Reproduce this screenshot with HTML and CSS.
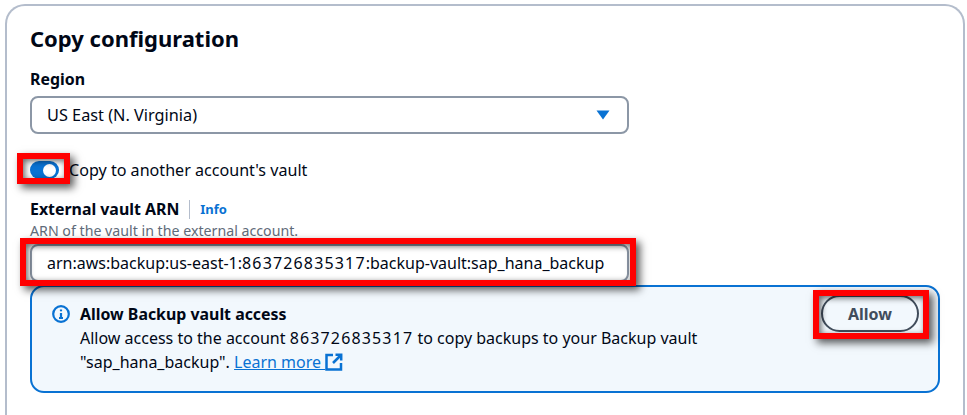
FILE: index.html
```html
<!DOCTYPE html>
<html lang="en">
<head>
<meta charset="UTF-8">
<meta name="viewport" content="width=device-width, initial-scale=1.0">
<title>Copy configuration</title>
<link rel="stylesheet" href="styles.css">
</head>
<body>
    <div class="card">
        <h2 class="card-title">Copy configuration</h2>

        <div class="field-label region-label">Region</div>
        <div class="select">
            <span>US East (N. Virginia)</span>
            <svg class="select-arrow" width="14" height="10" viewBox="0 0 14 10"><path d="M0.5 0.5H13.5L7 9.5Z" fill="#0972d3"/></svg>
        </div>

        <div class="toggle-row">
            <span class="toggle"><span class="toggle-knob"></span></span>
            <span>Copy to another account's vault</span>
        </div>

        <div class="label-row">
            <span class="field-label">External vault ARN</span>
            <span class="label-divider"></span>
            <a class="info-link" href="#">Info</a>
        </div>
        <div class="field-desc">ARN of the vault in the external account.</div>
        <div class="text-input">arn:aws:backup:us-east-1:<span class="digits">863726835317</span>:backup-vault:sap_hana_backup</div>

        <div class="alert">
            <svg class="alert-icon" width="18" height="18" viewBox="0 0 18 18" fill="none" stroke="#0972d3" stroke-width="2.2">
                <circle cx="9" cy="9" r="7.8"/>
                <path d="M9 8V13M7 13H11"/>
                <path d="M9 4.5V6.3"/>
            </svg>
            <div class="alert-body">
                <div class="alert-title">Allow Backup vault access</div>
                <div>Allow access to the account <span class="digits">863726835317</span> to copy backups to your Backup vault</div>
                <div>"sap_hana_backup". <a class="learn-link" href="#">Learn more <svg class="ext-icon" width="18" height="18" viewBox="0 0 18 18" fill="none" stroke="#0972d3" stroke-width="2.5"><path d="M8 2H1.5V16.5H16V10"/><path d="M10.5 1.8H16.2V7.5"/><path d="M16 2L8 10"/></svg></a></div>
            </div>
            <button class="allow-btn">Allow</button>
        </div>
    </div>

    <!-- Red annotation boxes -->
    <div class="mark mark-toggle"></div>
    <div class="mark mark-input"></div>
    <div class="mark mark-allow"></div>
</body>
</html>
```

FILE: styles.css
```css
html, body {
    height: 100%;
}

body {
    display: flex;
    margin: 0;
    padding: 4px 2px 0 5px;
    box-sizing: border-box;
    background: white;
    color: #000716;
    font-family: "Noto Sans", "Open Sans", sans-serif;
    font-size: 16px;
    overflow: hidden;
    position: relative;
}

.card {
    flex: 1;
    box-sizing: border-box;
    padding: 15px 23px 0 23px;
    border: 2px solid #b4bdcc;
    border-bottom: none;
    border-radius: 20px 20px 0 0;
}

.card-title {
    margin: 0;
    font-size: 22px;
    line-height: 34px;
    font-weight: 700;
}

.field-label {
    font-weight: 700;
    font-size: 15.9px;
    line-height: 22px;
}

.region-label {
    margin-top: 13px;
}

.select {
    display: flex;
    justify-content: space-between;
    align-items: center;
    box-sizing: border-box;
    width: 599px;
    height: 38px;
    margin-top: 6px;
    padding: 0 17px 0 15px;
    border: 2px solid #8c97a6;
    border-radius: 8px;
    font-size: 16.3px;
}

.toggle-row {
    display: flex;
    align-items: center;
    gap: 10px;
    margin-top: 25px;
    line-height: 22px;
    font-size: 16.1px;
}

.toggle {
    display: flex;
    align-items: center;
    justify-content: flex-end;
    box-sizing: border-box;
    width: 29px;
    height: 18px;
    padding-right: 3px;
    border-radius: 9px;
    background: #0972d3;
}

.toggle-knob {
    width: 13px;
    height: 13px;
    border-radius: 50%;
    background: white;
}

.label-row {
    display: flex;
    align-items: center;
    margin-top: 17px;
}

.label-divider {
    width: 1px;
    height: 19px;
    margin: 0 10px;
    background: #b4bdcc;
}

.info-link {
    color: #0972d3;
    font-size: 13px;
    font-weight: 700;
    text-decoration: none;
}

.field-desc {
    margin-top: 1px;
    font-size: 14.2px;
    line-height: 20px;
    color: #5f6b7a;
}

.text-input {
    box-sizing: border-box;
    width: 599px;
    height: 38px;
    margin-top: 3px;
    padding: 0 15px;
    border: 2px solid #8c97a6;
    border-radius: 8px;
    line-height: 34px;
}

/* digits are wider than this font's in the original */
.digits {
    letter-spacing: 1.15px;
}

.alert {
    display: flex;
    align-items: flex-start;
    box-sizing: border-box;
    width: 910px;
    height: 108px;
    margin-top: 3px;
    padding: 8px 19px 0 20px;
    border: 2px solid #0972d3;
    border-radius: 14px;
    background: #f2f8fd;
}

.alert-icon {
    flex: none;
    margin-top: 10px;
}

.alert-body {
    flex: 1;
    margin: 7px 0 0 10px;
    line-height: 24px;
    font-size: 16px;
}

.alert-title {
    font-weight: 700;
    font-size: 15.9px;
}

.learn-link {
    color: #0972d3;
    text-decoration: underline;
}

.ext-icon {
    vertical-align: -3px;
}

.allow-btn {
    box-sizing: border-box;
    width: 98px;
    height: 37px;
    border: 2px solid #414d5c;
    border-radius: 19px;
    background: transparent;
    color: #414d5c;
    font-family: inherit;
    font-size: 16px;
    font-weight: 700;
}

/* Red boxes drawn over the screenshot */
.mark {
    position: absolute;
    box-sizing: border-box;
    border: 6px solid #ff0000;
    box-shadow: 4px 4px 8px rgba(0, 0, 0, 0.65), inset 2px 2px 6px rgba(0, 0, 0, 0.6);
}

.mark-toggle {
    left: 17px;
    top: 153px;
    width: 53px;
    height: 31px;
}

.mark-input {
    left: 20px;
    top: 238px;
    width: 616px;
    height: 48px;
}

.mark-allow {
    left: 813px;
    top: 290px;
    width: 116px;
    height: 49px;
}
```
